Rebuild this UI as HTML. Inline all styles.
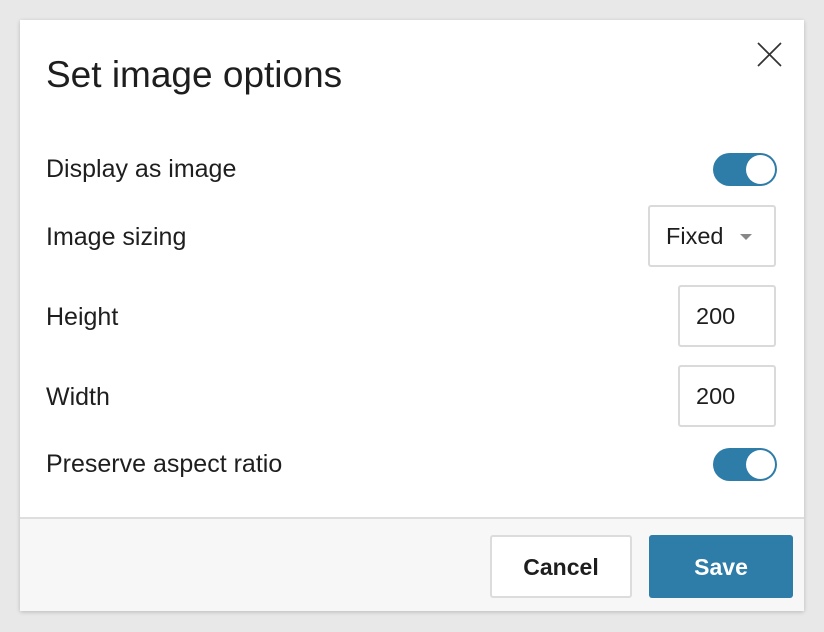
<!DOCTYPE html>
<html><head><style>
body{margin:0;width:824px;height:632px;background:#e8e8e8;font-family:"Liberation Sans",sans-serif;color:#1e1e1e;position:relative;overflow:hidden}
.dlg{position:absolute;left:20px;top:20px;width:784px;height:591px;background:#fff;box-shadow:0 1px 4px rgba(0,0,0,.2)}
.abs{position:absolute}
.title{left:26px;top:34px;font-size:37px;line-height:42px}
.lbl{left:26px;font-size:25px;line-height:30px}
.tog{width:64px;height:33px;border-radius:17px;background:#2e7ca8}
.tog::after{content:"";position:absolute;right:2px;top:2px;width:29px;height:29px;border-radius:50%;background:#fff}
.box{border:2px solid #dadada;border-radius:3px;box-sizing:border-box;font-size:23.5px;line-height:58px;padding-left:16px}
.foot{left:0;top:497px;width:784px;height:94px;background:#f7f7f7;border-top:2px solid #dedede;box-sizing:border-box}
.btn{top:515px;height:63px;border-radius:3px;box-sizing:border-box;font-size:23px;font-weight:bold;text-align:center}
</style></head><body>
<div class="dlg">
<div class="abs title">Set image options</div>
<svg class="abs" style="left:736px;top:21px" width="28" height="28"><path d="M2 2L25 25M25 2L2 25" stroke="#333" stroke-width="1.7" fill="none"/></svg>
<div class="abs lbl" style="top:134px">Display as image</div>
<div class="abs tog" style="left:693px;top:133px"></div>
<div class="abs lbl" style="top:202px">Image sizing</div>
<div class="abs box" style="left:628px;top:185px;width:128px;height:62px">Fixed<span style="position:absolute;left:90px;top:27px;border-left:6px solid transparent;border-right:6px solid transparent;border-top:6px solid #888"></span></div>
<div class="abs lbl" style="top:282px">Height</div>
<div class="abs box" style="left:658px;top:265px;width:98px;height:62px">200</div>
<div class="abs lbl" style="top:362px">Width</div>
<div class="abs box" style="left:658px;top:345px;width:98px;height:62px">200</div>
<div class="abs lbl" style="top:429px">Preserve aspect ratio</div>
<div class="abs tog" style="left:693px;top:428px"></div>
<div class="abs foot"></div>
<div class="abs btn" style="left:470px;width:142px;background:#fff;border:2px solid #dcdcdc;line-height:61px">Cancel</div>
<div class="abs btn" style="left:629px;width:144px;background:#2e7ca8;color:#fff;line-height:65px">Save</div>
</div>
</body></html>
